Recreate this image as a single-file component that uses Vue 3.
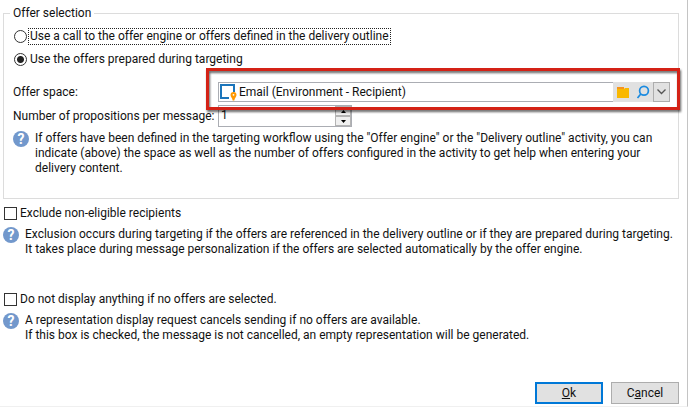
<script setup>
import { ref } from 'vue'

const source = ref('targeting')
const count = ref('1')
const space = ref('Email (Environment - Recipient)')
const exclude = ref(false)
const hideEmpty = ref(false)

function step(delta) {
  count.value = String(Math.max(1, Number(count.value) + delta))
}
</script>

<template>
  <main class="dialog">
    <fieldset class="group">
      <legend>Offer selection</legend>

      <label class="option">
        <input v-model="source" type="radio" name="source" value="engine" />
        <span class="caption focused">Use a call to the offer engine or offers defined in the delivery outline</span>
      </label>
      <label class="option">
        <input v-model="source" type="radio" name="source" value="targeting" />
        <span class="caption">Use the offers prepared during targeting</span>
      </label>

      <div class="fields">
        <label for="space">Offer space:</label>
        <div class="picker">
          <svg class="space-icon" viewBox="0 0 18 18" aria-hidden="true">
            <path d="M10 15H2V2h13v7" fill="none" stroke="#1b75bb" stroke-width="2" />
            <path d="M14.500 9a3 3 0 0 1 3 3c0 2-1.800 2.500-2.200 5.500h-1.600c-.4-3-2.200-3.500-2.200-5.500A3 3 0 0 1 14.500 9z" fill="#ff9800" />
            <circle cx="14.500" cy="11.800" r=".9" fill="#fff" />
          </svg>
          <input id="space" v-model="space" type="text" />
          <button type="button" class="tool" aria-label="Open folder">
            <svg width="12" height="11" viewBox="0 0 12 11"><path d="M0 0h7v3H0z" fill="#f7941d" /><path d="M0 2h7l1-1h4v10H0z" fill="#f9b800" /></svg>
          </button>
          <button type="button" class="tool" aria-label="Search">
            <svg width="14" height="14" viewBox="0 0 14 14" fill="none" stroke="#1c8be0" stroke-width="1.700"><circle cx="8" cy="5.700" r="4.400" /><path d="M5 8.800L1.500 13" /></svg>
          </button>
          <button type="button" class="drop" aria-label="Show list">
            <svg width="9" height="6" viewBox="0 0 9 6" fill="none" stroke="#555" stroke-width="1.300"><path d="M.5.5l4 4 4-4" /></svg>
          </button>
          <span class="highlight"></span>
        </div>

        <label for="count">Number of propositions per message:</label>
        <div class="spinner">
          <input id="count" v-model="count" type="text" />
          <div class="steps">
            <button type="button" aria-label="Increase" @click="step(1)">
              <svg width="5" height="3" viewBox="0 0 5 3"><path d="M0 3h5L2.500 0z" /></svg>
            </button>
            <button type="button" aria-label="Decrease" @click="step(-1)">
              <svg width="5" height="3" viewBox="0 0 5 3"><path d="M0 0h5L2.500 3z" /></svg>
            </button>
          </div>
        </div>
      </div>

      <div class="help inner">
        <span class="badge">?</span>
        <p>If offers have been defined in the targeting workflow using the "Offer engine" or the "Delivery outline" activity, you can<br />indicate (above) the space as well as the number of offers configured in the activity to get help when entering your<br />delivery content.</p>
      </div>
    </fieldset>

    <section class="setting">
      <label class="option">
        <input v-model="exclude" type="checkbox" />
        <span class="caption">Exclude non-eligible recipients</span>
      </label>
      <div class="help">
        <span class="badge">?</span>
        <p>Exclusion occurs during targeting if the offers are referenced in the delivery outline or if they are prepared during targeting.<br />It takes place during message personalization if the offers are selected automatically by the offer engine.</p>
      </div>
    </section>

    <section class="setting">
      <label class="option">
        <input v-model="hideEmpty" type="checkbox" />
        <span class="caption">Do not display anything if no offers are selected.</span>
      </label>
      <div class="help">
        <span class="badge">?</span>
        <p>A representation display request cancels sending if no offers are available.<br />If this box is checked, the message is not cancelled, an empty representation will be generated.</p>
      </div>
    </section>

    <footer class="actions">
      <button type="button" class="primary"><u>O</u>k</button>
      <button type="button">C<u>a</u>ncel</button>
    </footer>
  </main>
</template>

<style>
body {
  margin: 0;
  background: #fff;
}
</style>

<style scoped>
.dialog {
  box-sizing: border-box;
  min-height: 100vh;
  display: flex;
  flex-direction: column;
  padding: 5px 8px 2px 3px;
  border-right: 1px solid #c4c4c4;
  border-bottom: 1px solid #f0f0f0;
  color: #111;
  font-family: Roboto, sans-serif;
  font-size: 12px;
  line-height: 15px;
  white-space: nowrap;
}
input,
button {
  font: inherit;
  color: inherit;
  margin: 0;
  padding: 0;
  border: 0;
  border-radius: 0;
  box-sizing: border-box;
}
.group {
  margin: 0;
  min-width: 0;
  padding: 6px 8px 22px 9px;
  border: 1px solid #dcdcdc;
}
legend {
  padding: 0 3px;
  margin-left: -3px;
  line-height: 16px;
}
.option {
  display: flex;
  align-items: center;
  gap: 1px;
  height: 18px;
}
.group .option {
  margin-bottom: 5px;
  padding-left: 1px;
}
.option input {
  appearance: none;
  flex: none;
  width: 13px;
  height: 13px;
  border: 1px solid #333;
  background: #fff;
}
.option input[type="radio"] {
  border-radius: 50%;
}
.option input[type="radio"]:checked {
  background: radial-gradient(circle, #222 3px, #fff 4px);
}
.caption {
  padding: 0 1px;
  border: 1px solid transparent;
}
.focused {
  border: 1px dotted #222;
}
.fields {
  display: grid;
  grid-template-columns: 205px 1fr;
  align-items: center;
  row-gap: 3px;
  padding-top: 9px;
}
.picker {
  position: relative;
  display: flex;
  height: 20px;
  background: #e1e1e1;
}
.picker input {
  flex: 1;
  min-width: 0;
  padding-left: 2px;
  background: #fff;
  border: 1px solid #abadb3;
  border-width: 1px 0;
}
.space-icon {
  flex: none;
  box-sizing: border-box;
  width: 19px;
  height: 20px;
  border: 1px solid #abadb3;
  border-right: 0;
  background: #fff;
}
.tool {
  display: grid;
  place-items: center;
  width: 20px;
  background: #e1e1e1;
}
.drop {
  display: grid;
  place-items: center;
  width: 17px;
  background: #e1e1e1;
  border: 1px solid #adadad;
}
.highlight {
  position: absolute;
  inset: -14px -10px -8px -12px;
  border: 3px solid #d42216;
  filter: drop-shadow(1px 2px 1px rgba(0, 0, 0, 0.6));
  pointer-events: none;
}
.spinner {
  display: flex;
  box-sizing: border-box;
  width: 134px;
  height: 22px;
  border: 1px solid #abadb3;
}
.spinner input {
  flex: 1;
  min-width: 0;
  padding: 0 2px 2px;
  background: transparent;
}
.steps {
  display: grid;
  grid-template-rows: 1fr 1fr;
  width: 16px;
}
.steps button {
  display: grid;
  place-items: center;
  background: #f0f0f0;
  border: 1px solid #b4b4b4;
}
.help {
  display: flex;
  gap: 6px;
}
.help p {
  margin: 0;
}
.badge {
  display: grid;
  place-items: center;
  flex: none;
  width: 16px;
  height: 16px;
  border-radius: 50%;
  background: #7298cc;
  color: #fff;
  font-size: 14px;
  font-weight: 700;
}
.inner {
  margin-top: 4px;
}
.setting {
  min-height: 81px;
  padding-top: 5px;
}
.setting .option {
  margin-bottom: 5px;
  padding-left: 1px;
}
.actions {
  display: flex;
  justify-content: flex-end;
  gap: 8px;
  margin-top: auto;
}
.actions button {
  width: 68px;
  height: 22px;
  background: #e1e1e1;
  border: 1px solid #adadad;
}
.actions .primary {
  border: 2px solid #0078d7;
}
</style>
